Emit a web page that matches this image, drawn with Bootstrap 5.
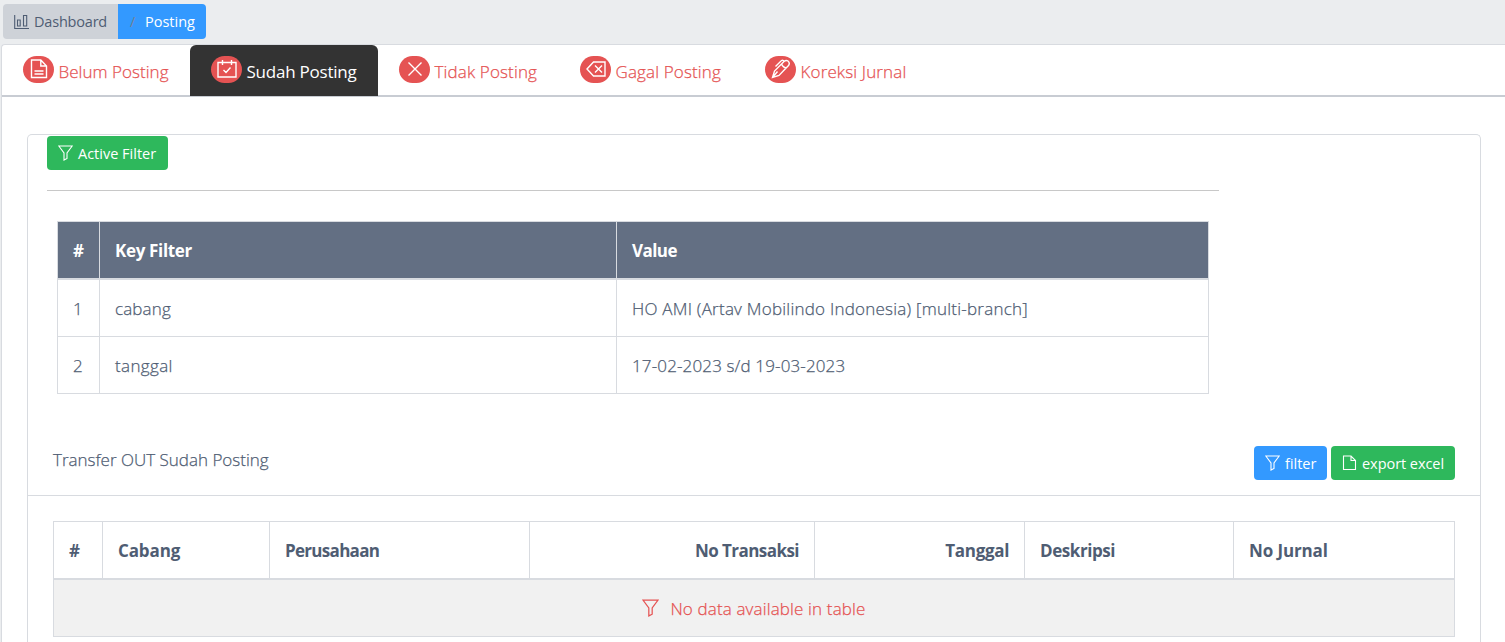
<!DOCTYPE html>
<html lang="id">
<head>
<meta charset="utf-8">
<meta name="viewport" content="width=device-width, initial-scale=1">
<title>Posting</title>
<link href="https://cdn.jsdelivr.net/npm/bootstrap@5.3.0/dist/css/bootstrap.min.css" rel="stylesheet">
<style>
body{background:#ebedef;color:#4f5d73;font-family:"Open Sans","Noto Sans",sans-serif;font-size:17px;font-weight:300;line-height:27px;height:642px;overflow:hidden}
svg{fill:none;stroke:currentColor;stroke-width:1.1;flex:none}
.t{white-space:nowrap;display:inline-block}
.nav-link:not(.active) .t,td,.head>.t{-webkit-text-stroke:.25px currentColor}
.crumbs{margin:4px 0 5px 3px;height:35px;font-size:14.5px;font-weight:400}
.crumb-home{background:#ced2d8;border-radius:4px 0 0 4px;width:115px;padding-left:11px;letter-spacing:-.2px}
.crumb-here{background:#39f;border-radius:0 4px 4px 0;width:88px;padding-left:12px}
.crumb-here i{color:#768192;font-style:normal;width:15px}
.panel{background:#fff;border:1px solid #d8dbe0;border-width:1px 0 0 1px;border-radius:4px 0 0 0;margin-left:1px;height:598px;overflow:hidden}
.nav-tabs{border-bottom:2px solid #c8ccd3;height:52px;flex-wrap:nowrap}
.nav-tabs .nav-link{border:0;margin:0;height:51px;padding:0 0 3px 21px;color:#e55353;font-size:17px;letter-spacing:.14px}
.nav-tabs .nav-link.active{background:#333;color:#fff;font-weight:400;letter-spacing:-.23px}
.nav-tabs .nav-link.w-first{letter-spacing:.04px}
.nav-tabs .nav-link .t{margin:4px 0 0 4.5px}
.w-first,.active{width:188px}.w-third{width:181px}.w-fourth{width:185px}
.pill-ic{width:31px;height:27px;border-radius:14px;background:#e55353;color:#fff}
.pill-ic svg{stroke-width:1.4}
.box{border:1px solid #d8dbe0;border-bottom:0;border-radius:5px 5px 0 0;margin:37px 24px 0 25px;height:508px}
.btn{height:34px;font-size:14.5px;padding:0 11px;border:0;border-radius:4px;color:#fff;font-weight:400}
.btn .t{padding-top:1px;margin-left:5px}
.btn-active{width:121px}.btn-filter{width:73px}.btn-excel{width:124px;letter-spacing:-.05px}
.btn-green,.btn-green:hover{background:#2eb85c;color:#fff}
.btn-blue,.btn-blue:hover{background:#39f;color:#fff}
.filters{width:1172px;margin:1px 0 0 19px}
.filters hr{margin:20px 0 30px;opacity:1;border-top:1px solid #c8c8c8}
.table{table-layout:fixed;margin:0;color:#4f5d73;border-color:#d8dbe0}
.table>:not(caption)>*>*{padding:0 15px;border:1px solid #d8dbe0;height:57px;vertical-align:middle;background:none;color:inherit;box-shadow:none}
.table>thead>tr>th{border-bottom-width:2px;font-weight:700;padding-top:2px}
.table>tbody>tr:first-child>td{height:58px;padding-top:1px}
.table>tbody>tr:nth-child(2)>td{padding-top:1px}
.keys{width:1152px;margin-left:10px}
.keys thead tr{background:#636f83;color:#fff}
.tight-1{letter-spacing:-.12px}.tight-3{letter-spacing:-.33px}.tight-4{letter-spacing:-.43px}.tight-5{letter-spacing:-.55px}.tight-7{letter-spacing:-.7px}
.loose-1{letter-spacing:.14px}.loose-2{letter-spacing:.23px}.loose-3{letter-spacing:.36px}
.head{height:102px;padding:52px 25px 0;border-bottom:1px solid #d8dbe0;gap:4px}
.table.data{width:1402px;margin:25px 0 0 25px}
.table.data tbody{background:#f1f1f1;color:#e55353}
.empty-note{gap:11px}
</style>
</head>
<body>
<nav class="crumbs d-flex">
<div class="crumb-home d-flex align-items-center"><svg width="16" height="16" viewBox="0 0 16 16"><path d="M.7 1v13.500H15M3.500 12V6h2.700v6zM9.500 12V1.500h3.200V12z"/></svg><span class="t ms-1">Dashboard</span></div>
<div class="crumb-here d-flex align-items-center text-white"><i>/</i><span class="t">Posting</span></div>
</nav>
<main class="panel">
<ul class="nav nav-tabs">
<li class="nav-item"><a class="nav-link w-first d-flex align-items-center" href="#"><span class="pill-ic d-flex align-items-center justify-content-center"><svg width="18" height="20" viewBox="0 0 18 20"><path d="M1.500 1h9.300l5.700 6v11.500h-15zM10.800 1v6h5.700M4.500 12h9M4.500 15h9"/></svg></span><span class="t">Belum Posting</span></a></li>
<li class="nav-item"><a class="nav-link active d-flex align-items-center" href="#"><span class="pill-ic d-flex align-items-center justify-content-center"><svg width="20" height="20" viewBox="0 0 20 20"><path d="M1 3.500h18v14.500H1zM5.500 1v5M14.500 1v5M6.500 11l2.500 2.500 4.500-5"/></svg></span><span class="t">Sudah Posting</span></a></li>
<li class="nav-item"><a class="nav-link w-third d-flex align-items-center" href="#"><span class="pill-ic d-flex align-items-center justify-content-center"><svg width="16" height="16" viewBox="0 0 16 16"><path d="M1.500 1.500l13 13M14.500 1.500l-13 13"/></svg></span><span class="t">Tidak Posting</span></a></li>
<li class="nav-item"><a class="nav-link w-fourth d-flex align-items-center" href="#"><span class="pill-ic d-flex align-items-center justify-content-center"><svg width="20" height="16" viewBox="0 0 20 16"><path d="M1 8l6.500-7H19v14H7.500zM9 4.500l7 7M16 4.500l-7 7"/></svg></span><span class="t">Gagal Posting</span></a></li>
<li class="nav-item"><a class="nav-link d-flex align-items-center" href="#"><span class="pill-ic d-flex align-items-center justify-content-center"><svg width="20" height="20" viewBox="0 0 20 20"><path d="M1.500 18.500l2-6.500L13 2.500q2-1.800 4-.5 2.300 2 .5 4.500L8 16.500zM1.500 18.500l5-6M4.500 7.500l6-6q1.500-.8 2.800 1M10.500 5q1.500 3.500 4.500 4"/></svg></span><span class="t">Koreksi Jurnal</span></a></li>
</ul>
<section class="box">
<div class="filters">
<button class="btn btn-green btn-active d-flex align-items-center"><svg width="15" height="16" viewBox="0 0 15 16"><path d="M.8 1h13.400L9 8v5.500L6 15V8z"/></svg><span class="t">Active Filter</span></button>
<hr>
<table class="table keys">
<colgroup><col style="width:42px"><col style="width:517px"><col></colgroup>
<thead><tr><th>#</th><th><span class="t tight-3">Key Filter</span></th><th><span class="t tight-5">Value</span></th></tr></thead>
<tbody>
<tr><td>1</td><td><span class="t loose-1">cabang</span></td><td><span class="t loose-2">HO AMI (Artav Mobilindo Indonesia) [multi-branch]</span></td></tr>
<tr><td>2</td><td><span class="t loose-3">tanggal</span></td><td><span class="t loose-1">17-02-2023 s/d 19-03-2023</span></td></tr>
</tbody></table>
</div>
<div class="head d-flex align-items-start">
<span class="t me-auto">Transfer OUT Sudah Posting</span>
<button class="btn btn-blue btn-filter d-flex align-items-center"><svg width="15" height="16" viewBox="0 0 15 16"><path d="M.8 1h13.400L9 8v5.500L6 15V8z"/></svg><span class="t">filter</span></button>
<button class="btn btn-green btn-excel d-flex align-items-center"><svg width="15" height="16" viewBox="0 0 15 16"><path d="M1.500 1h7.500L13.500 5.500V14.500H1.500zM9 1v4.500h4.500"/></svg><span class="t">export excel</span></button>
</div>
<table class="table data">
<colgroup><col style="width:49px"><col style="width:167px"><col style="width:260px"><col style="width:285px"><col style="width:210px"><col style="width:209px"><col></colgroup>
<thead><tr><th>#</th><th><span class="t tight-1">Cabang</span></th><th><span class="t tight-7">Perusahaan</span></th><th class="text-end"><span class="t tight-5">No Transaksi</span></th><th class="text-end"><span class="t tight-3">Tanggal</span></th><th><span class="t tight-4">Deskripsi</span></th><th><span class="t tight-1">No Jurnal</span></th></tr></thead>
<tbody><tr><td colspan="7"><div class="empty-note d-flex align-items-center justify-content-center"><svg width="17" height="18" viewBox="0 0 15 16"><path d="M.8 1h13.400L9 8v5.500L6 15V8z"/></svg><span class="t loose-1">No data available in table</span></div></td></tr></tbody>
</table>
</section>
</main>
<script src="https://cdn.jsdelivr.net/npm/bootstrap@5.3.0/dist/js/bootstrap.bundle.min.js"></script>
</body>
</html>
